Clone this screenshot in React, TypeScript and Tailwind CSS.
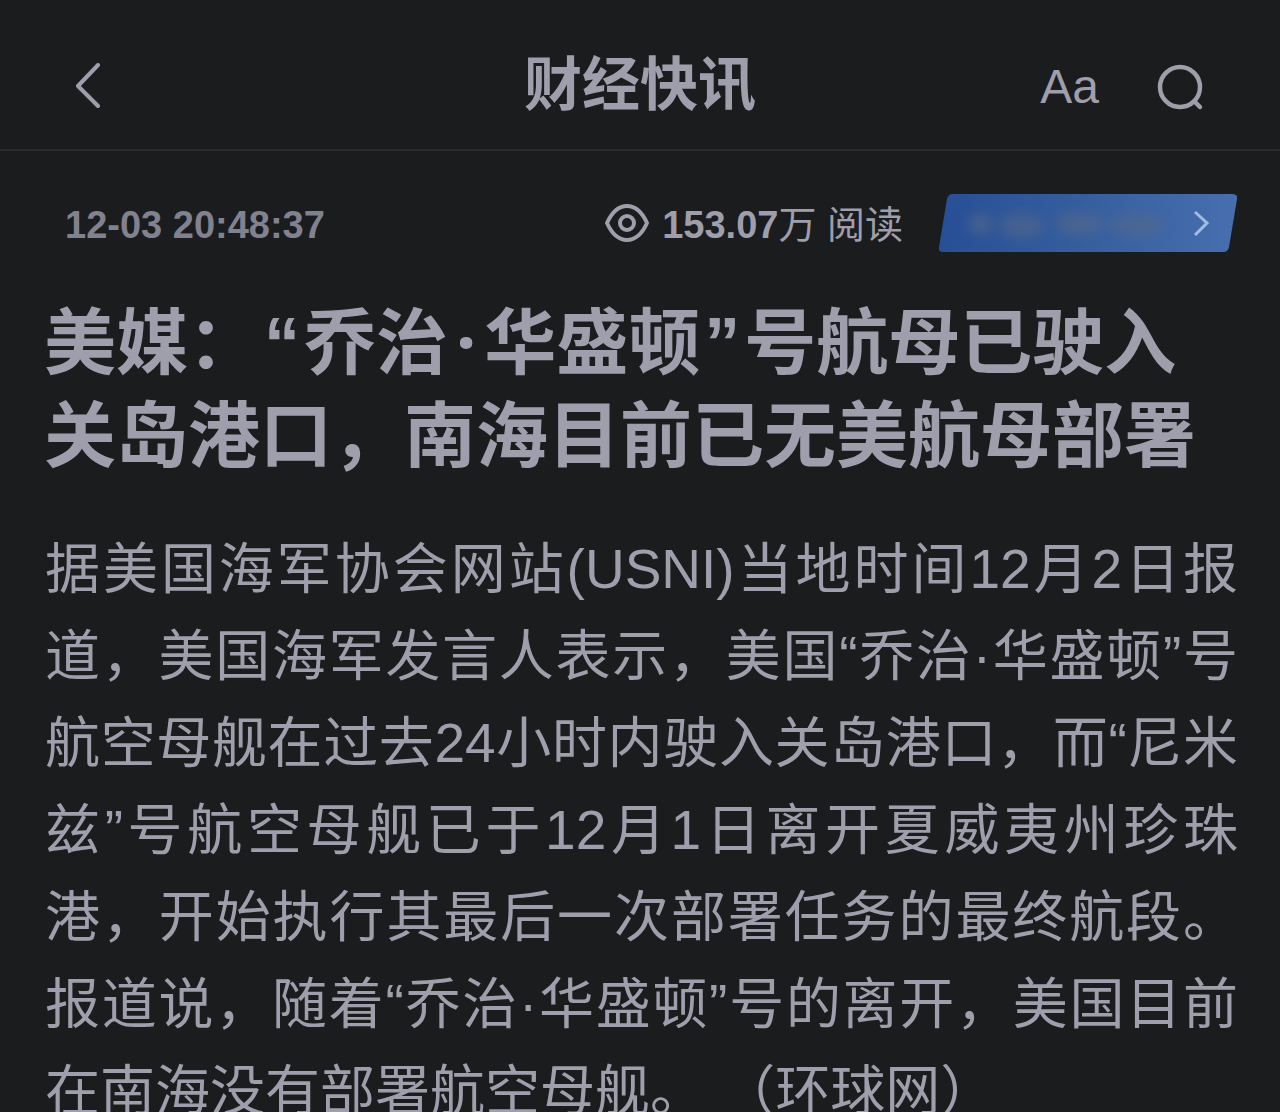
const body: { text: string; justify: boolean }[] = [
  { text: "据美国海军协会网站(USNI)当地时间12月2日报", justify: true },
  { text: "道，美国海军发言人表示，美国“乔治·华盛顿”号", justify: true },
  { text: "航空母舰在过去24小时内驶入关岛港口，而“尼米", justify: true },
  { text: "兹”号航空母舰已于12月1日离开夏威夷州珍珠", justify: true },
  { text: "港，开始执行其最后一次部署任务的最终航段。", justify: true },
  { text: "报道说，随着“乔治·华盛顿”号的离开，美国目前", justify: true },
  { text: "在南海没有部署航空母舰。 （环球网）", justify: false },
];

export default function App() {
  return (
    <div className="h-screen overflow-hidden bg-[#1b1c1e] font-['Liberation_Sans','Noto_Sans_CJK_SC',sans-serif] text-[#9f9eac]">
      <header className="grid h-[151px] grid-cols-3 items-center border-b-2 border-[#2a2b2d] px-[75px] pt-6">
        <button aria-label="返回" className="w-8">
          <svg viewBox="0 0 32 48" className="h-12 w-8" fill="none" stroke="currentColor" strokeWidth="4" strokeLinecap="round" strokeLinejoin="round">
            <path d="M23 2 3 23l20 20" />
          </svg>
        </button>
        <h1 className="pb-1 text-center text-[58px] leading-[64px] font-bold">财经快讯</h1>
        <div className="flex items-center justify-end gap-14">
          <button className="text-[48px] leading-[56px]">Aa</button>
          <button aria-label="搜索">
            <svg viewBox="0 0 50 50" className="h-[50px] w-[50px]" fill="none" stroke="currentColor" strokeWidth="4.5" strokeLinecap="round">
              <circle cx="25" cy="25" r="20" />
              <path d="m40 40 5 5" />
            </svg>
          </button>
        </div>
      </header>
      <main>
        <div className="flex items-center pt-[41px] pr-[43px] pl-[65px]">
          <time className="flex-1 pt-1 text-[38px] leading-[58px] font-bold text-[#82818f]">12-03 20:48:37</time>
          <svg viewBox="0 0 46 40" className="mr-3 h-10 w-[46px]" fill="none" stroke="currentColor" strokeWidth="4" strokeLinejoin="round">
            <path d="M3 20C8 9 15 3 23 3s15 6 20 17C38 31 31 37 23 37S8 31 3 20Z" />
            <circle cx="23" cy="20" r="7" />
          </svg>
          <span className="mr-9 pt-1 text-[38px] leading-[58px]"><b>153.07</b>万 阅读</span>
          <button aria-label="查看更多" className="h-[58px] w-[298px]">
            <svg viewBox="0 0 298 58" className="h-full w-full" fill="none">
              <defs>
                <linearGradient id="banner" x1="0" y1="0" x2="1" y2="0">
                  <stop offset="0" stopColor="#274f96" />
                  <stop offset="0.5" stopColor="#365f9f" />
                  <stop offset="1" stopColor="#476faf" />
                </linearGradient>
                <filter id="smudge" x="-20%" y="-50%" width="140%" height="200%">
                  <feGaussianBlur stdDeviation="6" />
                </filter>
              </defs>
              <path d="M14 0H293Q299 0 298 5L290 53Q289 58 284 58H4Q-1 58 0 53L8 5Q9 0 14 0Z" fill="url(#banner)" />
              <g fill="#566888" opacity="0.6" filter="url(#smudge)">
                <ellipse cx="42" cy="30" rx="12" ry="11" />
                <ellipse cx="82" cy="32" rx="22" ry="12" />
                <ellipse cx="140" cy="30" rx="24" ry="11" />
                <ellipse cx="198" cy="31" rx="27" ry="11" />
              </g>
              <path d="m256 18 12 11-12 12" stroke="#a3bce0" strokeWidth="3" />
            </svg>
          </button>
        </div>
        <h2 className="mt-[43px] px-[44px] text-[72px] leading-[93px] font-bold whitespace-nowrap">
          美媒：<span className="mx-1">“</span>乔治<span className="mx-2 font-['Noto_Sans'] leading-none">·</span>华盛顿<span className="mx-1">”</span>号航母已驶入
          <br />
          关岛港口，南海目前已无美航母部署
        </h2>
        <article className="mt-[43px] pr-[42px] pl-[45px] text-[55px] leading-[87px] [text-spacing-trim:space-all]">
          {body.map((line) => (
            <p key={line.text} className={line.justify ? "[text-align-last:justify] [text-justify:inter-character] whitespace-nowrap" : "whitespace-nowrap"}>
              {line.text}
            </p>
          ))}
        </article>
      </main>
    </div>
  );
}
